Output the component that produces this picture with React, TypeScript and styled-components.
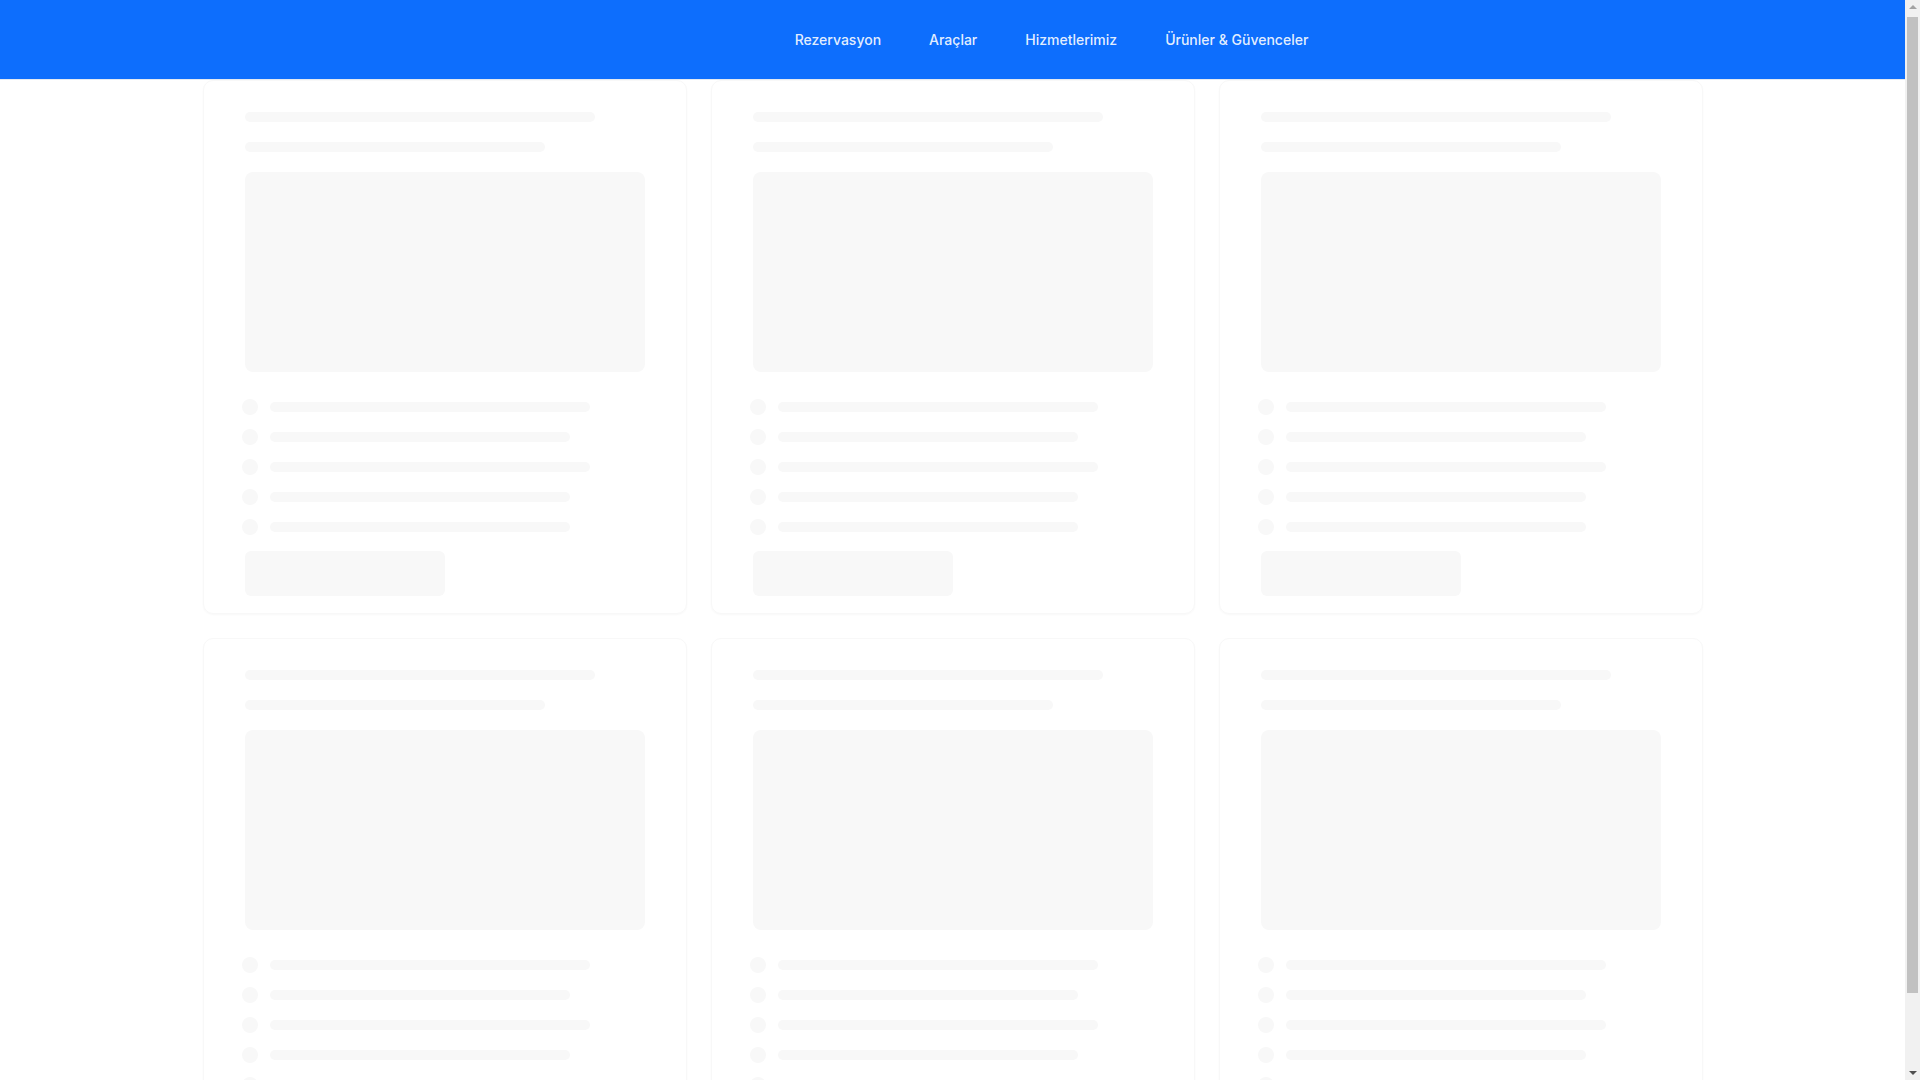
import styled, { createGlobalStyle } from "styled-components";

const GlobalStyle = createGlobalStyle`
  * { box-sizing: border-box; }
  body {
    margin: 0;
    background: #ffffff;
    font-family: Inter, "Noto Sans", "Liberation Sans", sans-serif;
    overflow: hidden;
  }
`;

const Page = styled.div`
  height: 100vh;
  display: flex;
`;

const Content = styled.div`
  flex: 1;
  min-width: 0;
  overflow: hidden;
`;

const ScrollTrack = styled.div`
  width: 15px;
  flex-shrink: 0;
  background: #f1f1f1;
  display: flex;
  flex-direction: column;
  align-items: center;
  justify-content: space-between;
  padding: 5px 0;
`;

const Arrow = styled.div<{ $down?: boolean }>`
  width: 0;
  height: 0;
  border-left: 4px solid transparent;
  border-right: 4px solid transparent;
  ${(p) =>
    p.$down ? "border-top: 4px solid #505050;" : "border-bottom: 4px solid #a3a3a3;"}
`;

const Thumb = styled.div`
  width: 11px;
  flex: 1;
  margin: 8px 0 78px;
  background: #c1c1c1;
`;

const Header = styled.header`
  height: 79px;
  background: #0d6efd;
  box-shadow: 0 1px 0 #e3e9f2;
  display: flex;
  justify-content: center;
  position: relative;
`;

const HeaderInner = styled.div`
  width: 1500px;
  display: flex;
  align-items: center;
  justify-content: center;
  padding-left: 198px;
`;

const NavLink = styled.a`
  padding: 0 24px;
  font-size: 14px;
  font-weight: 500;
  color: rgba(255, 255, 255, 0.9);
  cursor: pointer;
  text-decoration: none;
`;

const Main = styled.main`
  width: 1500px;
  margin: 1px auto 0;
  display: grid;
  grid-template-columns: repeat(3, 1fr);
  gap: 24px;
`;

const Card = styled.div`
  border: 1px solid #f8f8f8;
  border-radius: 10px;
  box-shadow: 0 1px 2px rgba(0, 0, 0, 0.03);
  padding: 31px 41px 17px;
  display: flex;
  flex-direction: column;
`;

const Bar = styled.div<{ $w: number; $mb?: number }>`
  width: ${(p) => p.$w}px;
  height: 10px;
  border-radius: 5px;
  background: #f8f8f8;
  margin-bottom: ${(p) => p.$mb ?? 0}px;
`;

const Picture = styled.div`
  width: 400px;
  height: 200px;
  border-radius: 8px;
  background: #f8f8f8;
  margin-bottom: 27px;
`;

const List = styled.div`
  display: flex;
  flex-direction: column;
  gap: 14px;
  margin-bottom: 16px;
`;

const Row = styled.div`
  display: flex;
  align-items: center;
  gap: 12px;
  margin-left: -3px;
`;

const Dot = styled.div`
  width: 16px;
  height: 16px;
  border-radius: 50%;
  background: #f8f8f8;
`;

const Button = styled.div`
  width: 200px;
  height: 45px;
  border-radius: 6px;
  background: #f8f8f8;
`;

const links = ["Rezervasyon", "Araçlar", "Hizmetlerimiz", "Ürünler & Güvenceler"];
const rowWidths = [320, 300, 320, 300, 300];

function SkeletonCard() {
  return (
    <Card>
      <Bar $w={350} $mb={20} />
      <Bar $w={300} $mb={20} />
      <Picture />
      <List>
        {rowWidths.map((w, i) => (
          <Row key={i}>
            <Dot />
            <Bar $w={w} />
          </Row>
        ))}
      </List>
      <Button />
    </Card>
  );
}

export default function App() {
  return (
    <Page>
      <GlobalStyle />
      <Content>
        <Header>
          <HeaderInner>
            {links.map((l) => (
              <NavLink key={l}>{l}</NavLink>
            ))}
          </HeaderInner>
        </Header>
        <Main>
          {Array.from({ length: 6 }).map((_, i) => (
            <SkeletonCard key={i} />
          ))}
        </Main>
      </Content>
      <ScrollTrack>
        <Arrow />
        <Thumb />
        <Arrow $down />
      </ScrollTrack>
    </Page>
  );
}
